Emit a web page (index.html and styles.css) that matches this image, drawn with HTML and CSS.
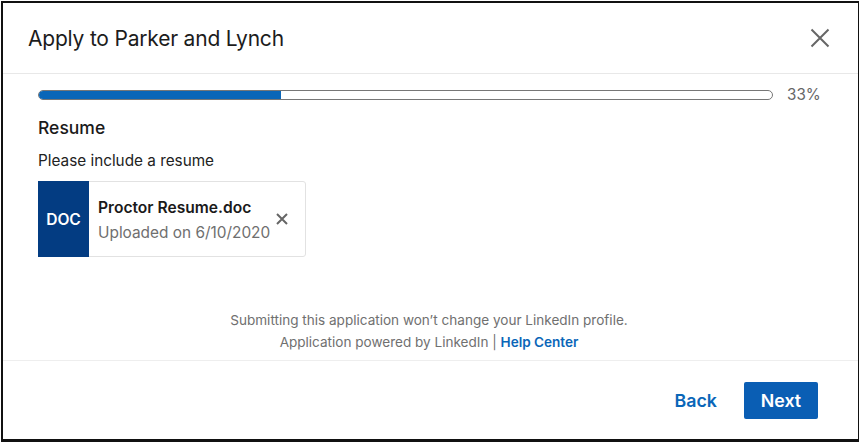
FILE: index.html
```html
<!DOCTYPE html>
<html lang="en">
<head>
  <meta charset="UTF-8">
  <title>Apply to Parker and Lynch</title>
  <link rel="stylesheet" href="styles.css">
</head>
<body>
  <div class="modal">
    <div class="modal-head">
      <h1>Apply to Parker and Lynch</h1>
      <svg class="close" width="24" height="24" viewBox="0 0 24 24"><path d="M3.5 3.5l17 17M20.5 3.5l-17 17"/></svg>
    </div>

    <div class="modal-body">
      <div class="progress">
        <div class="bar"><div class="fill"></div></div>
        <span class="pct">33%</span>
      </div>
      <h2>Resume</h2>
      <p class="hint">Please include a resume</p>
      <div class="file">
        <div class="file-type">DOC</div>
        <div class="file-info">
          <strong>Proctor Resume.doc</strong>
          <span>Uploaded on 6/10/2020</span>
        </div>
        <svg class="remove" width="12" height="12" viewBox="0 0 12 12"><path d="M1 1l10 10M11 1L1 11"/></svg>
      </div>
    </div>

    <div class="note">
      <p>Submitting this application won’t change your LinkedIn profile.</p>
      <p>Application powered by LinkedIn | <a href="#">Help Center</a></p>
    </div>

    <div class="modal-foot">
      <a class="btn-back" href="#">Back</a>
      <a class="btn-next" href="#">Next</a>
    </div>
  </div>
</body>
</html>
```

FILE: styles.css
```css
* { box-sizing: border-box; margin: 0; padding: 0; }
body { font-family: 'Inter', 'Liberation Sans', sans-serif; background: #fff; color: #000; }

/* Janela */
.modal {
  display: flex;
  flex-direction: column;
  width: 858px;
  height: 441px;
  margin: 1px 0 0 1px;
  background: #fff;
  border: 2px solid #111;
  border-right-width: 1px;
  border-bottom-width: 3px;
}

.modal-head {
  display: flex;
  align-items: center;
  justify-content: space-between;
  height: 71px;
  padding: 0 26px 0 25px;
  border-bottom: 1px solid #e8e8e8;
}
h1 {
  font-size: 21px;
  font-weight: 400;
  letter-spacing: -0.2px;
  color: #1c1c1c;
}
.close path { stroke: #666; stroke-width: 2; fill: none; }

.modal-body {
  flex: 1;
  padding: 15px 35px 0;
}

/* Progresso */
.progress {
  display: flex;
  align-items: center;
  gap: 14px;
  height: 12px;
}
.bar {
  width: 735px;
  height: 10px;
  border: 1px solid #777;
  border-radius: 5px;
  overflow: hidden;
}
.fill {
  width: 33%;
  height: 100%;
  background: #0a66b8;
}
.pct { margin-bottom: 2px; font-size: 15.2px; color: #666; }

h2 {
  margin-top: 17px;
  font-size: 17.5px;
  font-weight: 500;
  line-height: 20px;
  color: #1a1a1a;
}
.hint {
  margin-top: 13px;
  font-size: 15.3px;
  line-height: 20px;
  color: #222;
}

/* Arquivo */
.file {
  display: flex;
  align-items: center;
  width: 268px;
  height: 76px;
  margin-top: 10px;
  border: 1px solid #e2e2e2;
  border-radius: 3px;
}
.file-type {
  display: flex;
  align-items: center;
  justify-content: center;
  width: 51px;
  height: 76px;
  margin: -1px 0 -1px -1px;
  background: #033c82;
  color: #fff;
  font-size: 15.6px;
  font-weight: 600;
}
.file-info {
  display: flex;
  flex-direction: column;
  gap: 5px;
  margin-top: 3px;
  margin-left: 9px;
  font-size: 15.4px;
  line-height: 20px;
}
.file-info strong { font-size: 15.6px; font-weight: 600; color: #1a1a1a; }
.file-info span { color: #6f6f6f; }
.remove { margin-left: 6px; }
.remove path { stroke: #666; stroke-width: 2; fill: none; }

.note {
  padding: 0 3px 7px 0;
  text-align: center;
  font-size: 13.55px;
  line-height: 22px;
  color: #707070;
}
.note a {
  font-weight: 600;
  color: #0a66b8;
  text-decoration: none;
}

.modal-foot {
  display: flex;
  align-items: center;
  justify-content: flex-end;
  gap: 27px;
  height: 79px;
  padding: 0 40px 0 0;
  border-top: 1px solid #eee;
}
.btn-back, .btn-next {
  font-size: 17.8px;
  font-weight: 600;
  text-decoration: none;
}
.btn-back { color: #0a66b8; }
.btn-next {
  width: 74px;
  height: 37px;
  line-height: 37px;
  text-align: center;
  color: #fff;
  background: #0a5eb4;
  border-radius: 2px;
}
```
